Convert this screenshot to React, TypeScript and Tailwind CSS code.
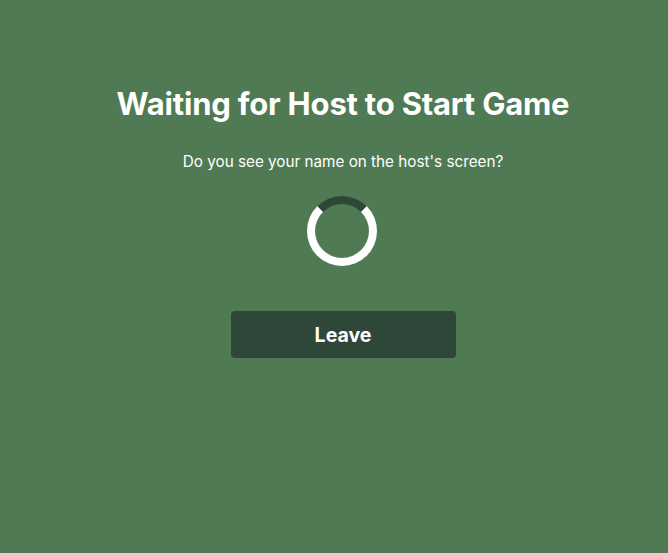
import React from 'react';

const App: React.FC = () => {
  return (
    <div
      className="min-h-screen w-full bg-[#507a53] flex flex-col items-center pt-[84px] pl-[18px] text-white"
      style={{ fontFamily: 'Inter, "Noto Sans", sans-serif' }}
    >
      <h1 className="text-[31px] leading-[40px] font-bold tracking-[-0.2px]">Waiting for Host to Start Game</h1>
      <p className="mt-[27px] text-[15.25px] leading-[22px]">Do you see your name on the host's screen?</p>
      <div className="mt-[23px] mr-[3px] w-[70px] h-[70px] rounded-full border-[8px] border-white border-t-[#2e4739]" />
      <button className="mt-[45px] w-[225px] h-[47px] rounded-[4px] bg-[#2e4739] text-[19.5px] font-bold pt-[2px]">
        Leave
      </button>
    </div>
  );
};

export default App;
